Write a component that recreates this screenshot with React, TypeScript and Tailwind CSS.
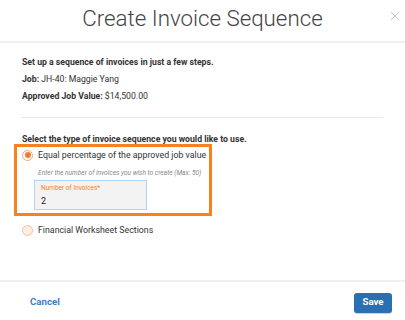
import React from "react";

const font = { fontFamily: "Roboto, 'Liberation Sans', sans-serif" };

const Radio = ({ checked }: { checked?: boolean }) =>
  checked ? (
    <span className="flex h-[11px] w-[11px] shrink-0 items-center justify-center rounded-full border border-[#f4a978] bg-white">
      <span className="h-[6px] w-[6px] rounded-full bg-[#f47b2a]" />
    </span>
  ) : (
    <span className="h-[11px] w-[11px] shrink-0 rounded-full border border-[#f7bf9c] bg-[#fdeee4]" />
  );

export default function App() {
  return (
    <div className="flex h-[320px] w-[405px] flex-col bg-white text-[#333]" style={font}>
      {/* Header */}
      <div className="relative flex h-[43px] shrink-0 items-center justify-center border-b-2 border-[#efefef] pb-[4px]">
        <h1 className="text-[22.3px] font-light leading-none text-[#444]">Create Invoice Sequence</h1>
        <button className="absolute right-[4px] top-[10px] p-[1px] text-[#c4c4c4]">
          <svg width="10" height="10" viewBox="0 0 10 10" fill="none" stroke="currentColor" strokeWidth="1">
            <path d="M1 1L9 9M9 1L1 9" />
          </svg>
        </button>
      </div>

      {/* Body */}
      <div className="flex-1 px-[22px] pt-[11px]">
        <div className="text-[8.7px] leading-[17px]">
          <p className="font-bold">Set up a sequence of invoices in just a few steps.</p>
          <p>
            <span className="font-bold">Job:</span> JH-40: Maggie Yang
          </p>
          <p>
            <span className="font-bold">Approved Job Value:</span> $14,500.00
          </p>
        </div>

        <div className="ml-[-1px] mt-[12px] border-t border-[#e8e8e8]" />

        <p className="mt-[15px] text-[8.7px] font-bold leading-[12px]">
          Select the type of invoice sequence you would like to use.
        </p>

        <div className="ml-[-8px] mt-[-1px] h-[72px] w-[198px] border-[3px] border-[#f5821f] pl-[5px] pt-[1px]">
          <label className="flex items-center gap-[5px] text-[8.8px] leading-[14px]">
            <Radio checked />
            <span>Equal percentage of the approved job value</span>
          </label>
          <p className="mt-[6px] pl-[16px] text-[6.6px] italic leading-[10px] text-[#8a8a8a]">
            Enter the number of invoices you wish to create (Max: 50)
          </p>
          <div className="ml-[12px] mt-[2px] h-[30px] w-[113px] border-[1.5px] border-[#b3d3f2] bg-[#f3f3f3] pl-[6px] pt-[2px]">
            <div className="text-[6.5px] leading-[10px] text-[#f5821f]">Number of Invoices*</div>
            <div className="mt-[1px] text-[9px] leading-[14px] text-[#222]">2</div>
          </div>
        </div>

        <label className="mt-[7px] flex items-center gap-[5px] text-[8.8px] leading-[14px]">
          <Radio />
          <span>Financial Worksheet Sections</span>
        </label>
      </div>

      {/* Footer */}
      <div className="flex h-[40px] shrink-0 items-center justify-between border-t-2 border-[#efefef] pl-[30px] pr-[13px] pt-[3px]">
        <button className="text-[9.7px] font-bold text-[#3a7fc4]">Cancel</button>
        <button className="h-[20px] w-[38px] rounded-[3px] bg-[#2b6fb3] text-[9.7px] font-bold text-white shadow-[0_1px_1px_rgba(0,0,0,0.2)]">
          Save
        </button>
      </div>
    </div>
  );
}
